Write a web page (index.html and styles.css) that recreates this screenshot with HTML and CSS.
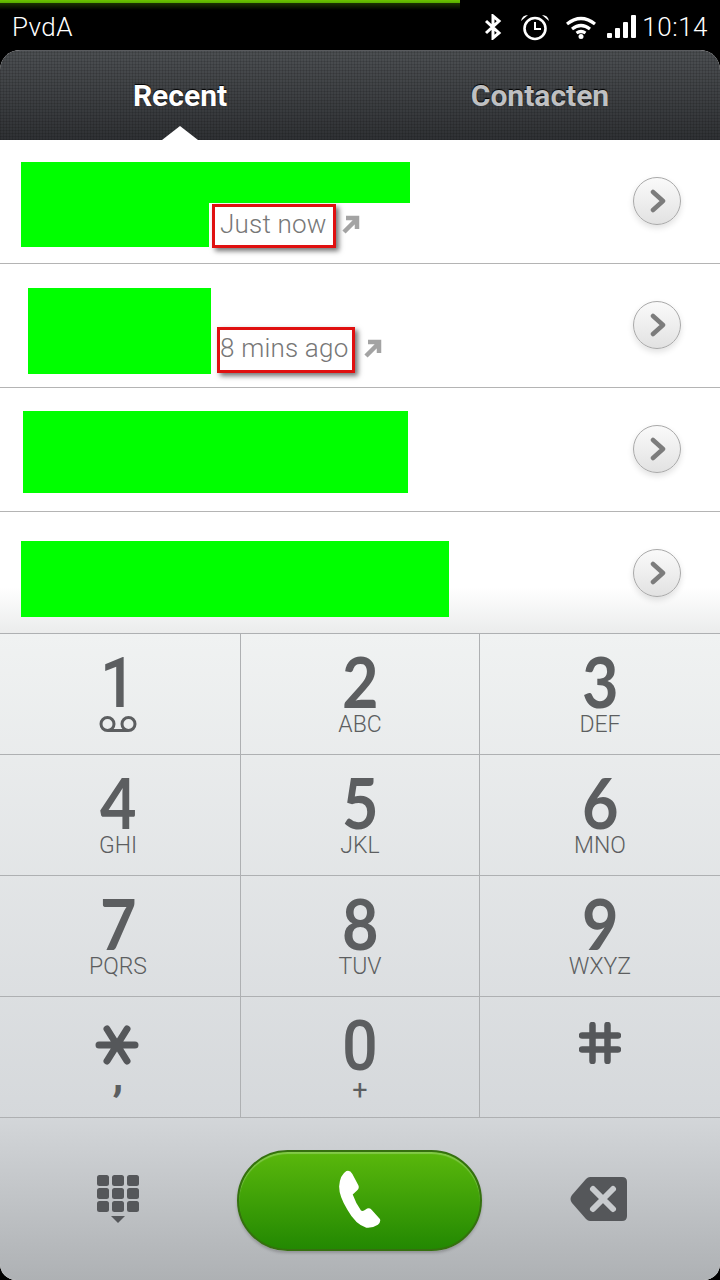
FILE: index.html
```html
<!DOCTYPE html>
<html lang="nl">
<head>
<meta charset="utf-8">
<title>Telefoon</title>
<link rel="stylesheet" href="styles.css">
</head>
<body>
<div class="screen">
  <div class="progress"></div>
  <header class="status">
    <span class="carrier">PvdA</span>
    <div class="status-right">
      <svg class="ic-bt" viewBox="0 0 18 26"><path d="M2 7l13 12-6 5V2l6 5L2 19" fill="none" stroke="#fff" stroke-width="3"/></svg>
      <svg class="ic-alarm" viewBox="0 0 30 28"><circle cx="15" cy="15.500" r="10.500" fill="none" stroke="#fff" stroke-width="2.600"/><path d="M15 9v7h6" fill="none" stroke="#fff" stroke-width="2"/><path d="M1 8q1-6 7-6zM29 8q-1-6-7-6z" fill="#fff"/></svg>
      <svg class="ic-wifi" viewBox="0 0 32 24"><path d="M2 9q14-11 28 0M7 14q9-7 18 0M11.500 18q4.500-3 9 0" fill="none" stroke="#fff" stroke-width="3.200"/><circle cx="16" cy="21.500" r="2.500" fill="#fff"/></svg>
      <svg class="ic-signal" viewBox="0 0 30 24"><rect x="0" y="18" width="5" height="5" rx="1" fill="#fff"/><rect x="8" y="13" width="5" height="10" rx="1" fill="#fff"/><rect x="16" y="7" width="5" height="16" rx="1" fill="#fff"/><rect x="24" y="0" width="5" height="23" rx="1" fill="#fff"/></svg>
      <span class="time">10:14</span>
    </div>
  </header>
  <main class="app">
    <nav class="tabs">
      <div class="tab tab-active">Recent</div>
      <div class="tab">Contacten</div>
    </nav>
    <section class="list">
      <div class="row">
        <div class="redact r1a"></div>
        <div class="redact r1b"></div>
        <div class="stamp s1"><span class="when">Just now</span></div>
        <svg class="out o1" viewBox="0 0 20 20"><path d="M3 18L15 6M5 4h11v11" fill="none" stroke="#a3a3a3" stroke-width="4.500"/></svg>
        <div class="chev"><svg viewBox="0 0 16 24"><path d="M3 3l10 9-10 9" fill="none" stroke="#7c7c7c" stroke-width="4.500" stroke-linecap="round" stroke-linejoin="round"/></svg></div>
      </div>
      <div class="row">
        <div class="redact r2"></div>
        <div class="stamp s2"><span class="when">8 mins ago</span></div>
        <svg class="out o2" viewBox="0 0 20 20"><path d="M3 18L15 6M5 4h11v11" fill="none" stroke="#a3a3a3" stroke-width="4.500"/></svg>
        <div class="chev"><svg viewBox="0 0 16 24"><path d="M3 3l10 9-10 9" fill="none" stroke="#7c7c7c" stroke-width="4.500" stroke-linecap="round" stroke-linejoin="round"/></svg></div>
      </div>
      <div class="row">
        <div class="redact r3"></div>
        <div class="chev"><svg viewBox="0 0 16 24"><path d="M3 3l10 9-10 9" fill="none" stroke="#7c7c7c" stroke-width="4.500" stroke-linecap="round" stroke-linejoin="round"/></svg></div>
      </div>
      <div class="row row-last">
        <div class="redact r4"></div>
        <div class="chev"><svg viewBox="0 0 16 24"><path d="M3 3l10 9-10 9" fill="none" stroke="#7c7c7c" stroke-width="4.500" stroke-linecap="round" stroke-linejoin="round"/></svg></div>
      </div>
    </section>
    <section class="pad">
      <div class="key"><span class="num num-alt">1</span><svg class="vm" viewBox="0 0 38 16"><path d="M9 14.500h20" fill="none" stroke="#5c5e60" stroke-width="3"/><circle cx="8.500" cy="8" r="6.500" fill="none" stroke="#5c5e60" stroke-width="3"/><circle cx="29.500" cy="8" r="6.500" fill="none" stroke="#5c5e60" stroke-width="3"/></svg></div>
      <div class="key"><span class="num">2</span><span class="sub">ABC</span></div>
      <div class="key"><span class="num">3</span><span class="sub">DEF</span></div>
      <div class="key"><span class="num">4</span><span class="sub">GHI</span></div>
      <div class="key"><span class="num">5</span><span class="sub">JKL</span></div>
      <div class="key"><span class="num">6</span><span class="sub">MNO</span></div>
      <div class="key"><span class="num">7</span><span class="sub">PQRS</span></div>
      <div class="key"><span class="num">8</span><span class="sub">TUV</span></div>
      <div class="key"><span class="num">9</span><span class="sub">WXYZ</span></div>
      <div class="key"><svg class="star" viewBox="0 0 44 40"><path d="M4 20h36M12 4l20 32M32 4L12 36" fill="none" stroke="#55575a" stroke-width="7" stroke-linecap="round"/></svg><span class="comma">,</span></div>
      <div class="key"><span class="num num-alt">0</span><span class="sub plus">+</span></div>
      <div class="key"><svg class="hash" viewBox="0 0 42 42"><path d="M13.500 3v36M28.500 3v36M3 13.500h36M3 27.500h36" fill="none" stroke="#55575a" stroke-width="6.500" stroke-linecap="round"/></svg></div>
    </section>
    <footer class="actions">
      <svg class="ic-grid" viewBox="0 0 42 50">
        <g fill="#55575a">
          <rect x="0" y="0" width="12" height="11" rx="2.500"/><rect x="15" y="0" width="12" height="11" rx="2.500"/><rect x="30" y="0" width="12" height="11" rx="2.500"/>
          <rect x="0" y="13" width="12" height="11" rx="2.500"/><rect x="15" y="13" width="12" height="11" rx="2.500"/><rect x="30" y="13" width="12" height="11" rx="2.500"/>
          <rect x="0" y="26" width="12" height="11" rx="2.500"/><rect x="15" y="26" width="12" height="11" rx="2.500"/><rect x="30" y="26" width="12" height="11" rx="2.500"/>
          <path d="M14 41h14l-7 7z"/>
        </g>
      </svg>
      <button class="call"><svg class="ic-phone" viewBox="0 0 126 175"><path d="M22 3Q33-1 40 12L58 46Q62 56 54 62L41 74Q50 100 66 122 72 126 80 119 90 112 98 120L123 148Q127 156 117 165 100 176 82 174 50 165 25 120 0 80 0 50 2 15 22 3Z" fill="#fff"/></svg></button>
      <svg class="ic-back" viewBox="0 0 58 46"><path d="M20 1h32q5 0 5 5v34q0 5-5 5H20q-2 0-4-2L2 27q-3-4 0-8L16 3q2-2 4-2z" fill="#55575a"/><path d="M23 13l20 20M43 13L23 33" fill="none" stroke="#c8cbce" stroke-width="6" stroke-linecap="round"/></svg>
    </footer>
  </main>
</div>
</body>
</html>
```
FILE: styles.css
```css
* { box-sizing: border-box; }
html, body { margin: 0; padding: 0; background: #000; }
.screen { position: relative; width: 720px; height: 1280px; overflow: hidden; background: #000; font-family: Roboto, "Liberation Sans", sans-serif; }
.progress { position: absolute; left: 0; top: 0; width: 460px; height: 10px; background: linear-gradient(#6cc400 0, #5cb000 25%, #1a3000 35%, #000 100%); }
.status { height: 50px; padding: 3px 12px 0 12px; display: flex; align-items: center; justify-content: space-between; color: #fff; }
.carrier { font-size: 26px; font-weight: 300; letter-spacing: .4px; }
.status-right { display: flex; align-items: center; }
.time { font-size: 26px; font-weight: 300; letter-spacing: .5px; margin-left: 5px; }
.ic-bt { width: 18px; height: 26px; margin-right: 18px; }
.ic-alarm { width: 30px; height: 28px; margin-right: 15px; }
.ic-wifi { width: 32px; height: 24px; margin-right: 10px; }
.ic-signal { width: 30px; height: 24px; }
.app { height: 1230px; border-radius: 20px 20px 16px 16px; overflow: hidden; background: #fff; display: flex; flex-direction: column; }
.tabs { position: relative; height: 90px; display: flex; border-top: 1px solid #5a5c5f;
  background:
    repeating-linear-gradient(0deg, rgba(0,0,0,.12) 0 1px, transparent 1px 3px),
    repeating-linear-gradient(90deg, rgba(0,0,0,.12) 0 1px, transparent 1px 3px),
    linear-gradient(#4c4f52, #2f3134); }
.tabs::after { content: ""; position: absolute; left: 162px; bottom: 0; border: 18px solid transparent; border-top: 0; border-bottom: 14px solid #fff; }
.tab { width: 360px; text-align: center; font-size: 30px; font-weight: 700; line-height: 90px; color: #bfc0c2; letter-spacing: 0; text-shadow: 0 -1px 1px #000; }
.tab-active { color: #fff; }
.list { height: 493px; background: #fff; }
.row { position: relative; height: 124px; border-bottom: 1px solid #b4b4b4; }
.row-last { height: 121px; border-bottom: 0; background: linear-gradient(#fff 0, #fff 62%, #ebecec 100%); }
.redact { position: absolute; background: #0f0; }
.r1a { left: 21px; top: 22px; width: 389px; height: 41px; }
.r1b { left: 21px; top: 63px; width: 188px; height: 44px; }
.r2 { left: 28px; top: 24px; width: 183px; height: 86px; }
.r3 { left: 23px; top: 23px; width: 385px; height: 82px; }
.r4 { left: 21px; top: 29px; width: 428px; height: 76px; }
.stamp { position: absolute; border: 3px solid #e01010; box-shadow: 3px 3px 5px rgba(0,0,0,.55); background: #fff; display: flex; align-items: center; padding-bottom: 4px; }
.s1 { left: 212px; top: 64px; width: 124px; height: 44px; padding-left: 5px; }
.s2 { left: 217px; top: 63px; width: 138px; height: 46px; padding-left: 0; }
.when { font-size: 26px; font-weight: 300; color: #777; letter-spacing: .2px; white-space: nowrap; }
.out { position: absolute; width: 20px; height: 20px; }
.o1 { left: 341px; top: 74px; }
.o2 { left: 363px; top: 74px; }
.chev { position: absolute; left: 633px; top: 37px; width: 48px; height: 48px; border-radius: 50%; border: 1px solid #a9a9a9; background: linear-gradient(#fafafa, #e2e2e2); box-shadow: 0 3px 6px rgba(0,0,0,.12); display: flex; align-items: center; justify-content: center; padding-left: 2px; }
.chev svg { width: 16px; height: 24px; }
.pad { display: grid; grid-template-columns: 241px 239px 240px; grid-auto-rows: 121px; border-top: 1px solid #aeb0b2; background: linear-gradient(#f0f2f2, #d5d8db); }
.key { display: flex; flex-direction: column; align-items: center; height: 121px; border-right: 1px solid #aeb0b2; border-bottom: 1px solid #aeb0b2; color: #5c5e60; }
.key:nth-child(3n) { border-right: 0; }
.key:nth-child(3n+1) { padding-right: 4px; }
.num { font-family: Lato, Roboto, sans-serif; font-size: 70px; line-height: 56px; height: 56px; margin-top: 19px; font-weight: 700; transform: scaleX(.9); }
.num-alt { font-family: Roboto, sans-serif; font-weight: 500; margin-top: 21px; margin-bottom: -2px; }
.sub { font-size: 23px; line-height: 24px; font-weight: 300; margin-top: 4px; }
.plus { font-size: 27px; font-weight: 400; margin-top: 6px; }
.vm { width: 38px; height: 16px; margin-top: 7px; }
.star { width: 44px; height: 40px; margin-top: 28px; margin-right: 2px; }
.comma { font-size: 44px; line-height: 20px; font-weight: 700; margin-top: 0; }
.hash { width: 42px; height: 42px; margin-top: 25px; }
.actions { flex: 1; display: flex; align-items: center; justify-content: space-between; padding: 0 92px 0 97px; background: linear-gradient(#d3d6d9, #aeb1b4); }
.ic-grid { width: 42px; height: 50px; margin-top: 2px; }
.call { width: 245px; height: 101px; margin: 3px 2.500px 0 12.500px; padding: 0; border: 2px solid #35700f; border-radius: 51px; background: linear-gradient(#5ab80c, #238802); box-shadow: inset 0 2px 1px rgba(255,255,255,.25), 0 2px 3px rgba(0,0,0,.2); display: flex; align-items: center; justify-content: center; }
.ic-phone { width: 42px; height: 58px; margin-bottom: 4px; }
.ic-back { width: 58px; height: 46px; }
```
